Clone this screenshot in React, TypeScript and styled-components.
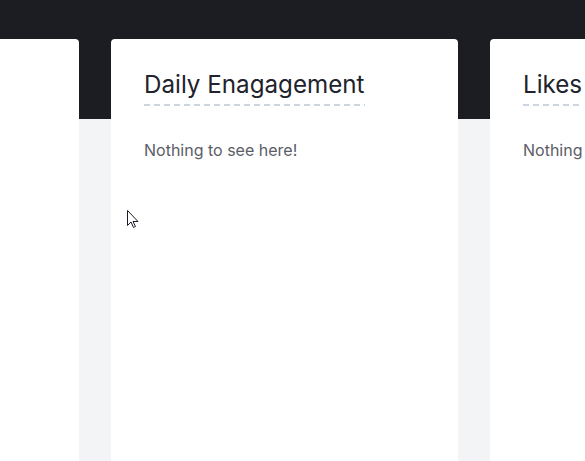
import React from "react";
import styled, { createGlobalStyle } from "styled-components";

const Global = createGlobalStyle`
  html, body { margin: 0; padding: 0; background: #f3f4f6; overflow: hidden; }
  body { font-family: Inter, "Noto Sans", sans-serif; }
`;

const Page = styled.div`
  position: relative;
  width: 585px;
  height: 461px;
  overflow: hidden;
  background: #f3f4f6;
`;

const Band = styled.div`
  height: 119px;
  background: #1c1d22;
`;

const Row = styled.div`
  display: flex;
  gap: 32px;
  margin-top: -80px;
  margin-left: -268px;
`;

const Card = styled.section`
  flex: 0 0 347px;
  min-height: 440px;
  background: #ffffff;
  border-radius: 4px;
  padding: 31px 33px;
  box-sizing: border-box;
`;

const Title = styled.h2`
  display: inline-block;
  margin: 0;
  padding-bottom: 7px;
  font-size: 24.2px;
  font-weight: 400;
  line-height: normal;
  color: #21232c;
  white-space: nowrap;
  background-image: repeating-linear-gradient(
    to right,
    #cdd6de 0 6px,
    transparent 6px 10px
  );
  background-repeat: no-repeat;
  background-size: 100% 2px;
  background-position: left bottom;
`;

const Empty = styled.p`
  margin: 34px 0 0;
  font-size: 16px;
  line-height: normal;
  color: #5b5d66;
  white-space: nowrap;
`;

const Cursor = styled.svg`
  position: absolute;
  left: 127px;
  top: 210px;
`;

const cards = ["Weekly Reach", "Daily Enagagement", "Likes"];

export default function App() {
  return (
    <>
      <Global />
      <Page>
        <Band />
        <Row>
          {cards.map((t) => (
            <Card key={t}>
              <Title>{t}</Title>
              <Empty>Nothing to see here!</Empty>
            </Card>
          ))}
        </Row>
        <Cursor width="12" height="19" viewBox="0 0 12 19">
          <path
            d="M0.5 0.5 L0.5 15.5 L4 12 L6.5 17.5 L8.5 16.5 L6 11.5 L11 11.5 Z"
            fill="#ffffff"
            stroke="#1a1c2c"
            strokeWidth="1"
            strokeLinejoin="miter"
          />
        </Cursor>
      </Page>
    </>
  );
}
